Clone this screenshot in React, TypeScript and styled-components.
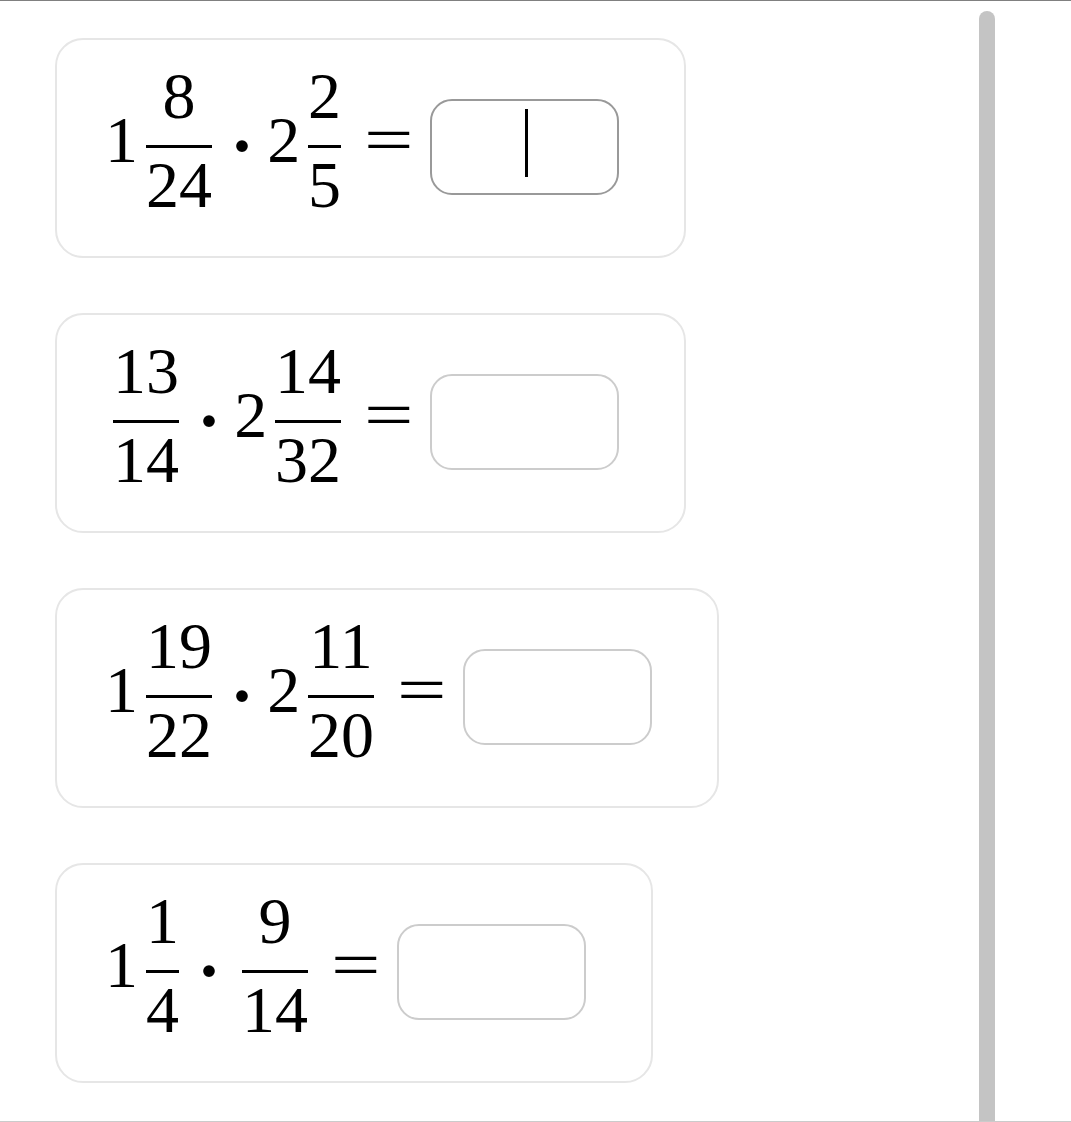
import React from 'react'
import styled, { createGlobalStyle } from 'styled-components'

const GlobalStyle = createGlobalStyle`
  html, body {
    margin: 0;
    padding: 0;
    background: #fff;
  }
  body {
    font-family: 'Liberation Serif', 'Times New Roman', serif;
  }
`

const Page = styled.div`
  box-sizing: border-box;
  height: 1122px;
  border-top: 1px solid #808080;
  border-bottom: 1px solid #cbcbcb;
  display: flex;
  overflow: hidden;
`

const List = styled.div`
  flex: 1;
  display: flex;
  flex-direction: column;
  align-items: flex-start;
  gap: 55px;
  padding: 37px 0 0 55px;
`

const Rail = styled.div`
  width: 16px;
  margin: 10px 76px 0 0;
  background: #c4c4c4;
  border-radius: 8px 8px 0 0;
`

const Card = styled.div`
  display: flex;
  align-items: center;
  padding: 23px 65px 38.4px 48px;
  border: 2px solid #e6e6e6;
  border-radius: 28px;
  font-size: 66px;
  line-height: 66px;
  color: #000;
`

const Whole = styled.span`
  display: inline-block;
  width: 0.5em;
  text-align: center;
`

const Frac = styled.span`
  display: inline-flex;
  flex-direction: column;
  align-items: center;
  padding: 0 0.12em;
`

const Num = styled.span`
  line-height: 66px;
  margin-bottom: 16px;
`

const Bar = styled.span`
  align-self: stretch;
  height: 2.6px;
  background: #000;
`

const Den = styled.span`
  line-height: 66px;
  margin-top: 4px;
`

const Dot = styled.span`
  display: inline-block;
  width: 0.278em;
  margin: 0 19px 0 10px;
  text-align: center;
  transform: translateY(6px) scale(1.5);
`

const Equals = styled.span`
  display: inline-block;
  width: 0.778em;
  margin: 0 16px 0 14px;
  text-align: center;
  transform: scaleX(1.33);
`

const AnswerBox = styled.div<{ $active?: boolean }>`
  box-sizing: border-box;
  width: 189px;
  height: 96px;
  margin-top: 14px;
  border: 2px solid ${p => (p.$active ? '#999' : '#ccc')};
  border-radius: 22px;
  display: flex;
  align-items: center;
  justify-content: center;
`

const Caret = styled.span`
  width: 2.5px;
  height: 68px;
  margin: 0 0 9px 3px;
  background: #000;
`

type Term = { w?: string; n: string; d: string }
type Row = { terms: Term[]; active?: boolean }

const rows: Row[] = [
  { terms: [{ w: '1', n: '8', d: '24' }, { w: '2', n: '2', d: '5' }], active: true },
  { terms: [{ n: '13', d: '14' }, { w: '2', n: '14', d: '32' }] },
  { terms: [{ w: '1', n: '19', d: '22' }, { w: '2', n: '11', d: '20' }] },
  { terms: [{ w: '1', n: '1', d: '4' }, { n: '9', d: '14' }] },
]

const MixedNumber = ({ term }: { term: Term }) => (
  <>
    {term.w && <Whole>{term.w}</Whole>}
    <Frac>
      <Num>{term.n}</Num>
      <Bar />
      <Den>{term.d}</Den>
    </Frac>
  </>
)

const App = () => (
  <>
    <GlobalStyle />
    <Page>
      <List>
        {rows.map((row, key) => (
          <Card key={key}>
            <MixedNumber term={row.terms[0]} />
            <Dot>·</Dot>
            <MixedNumber term={row.terms[1]} />
            <Equals>=</Equals>
            <AnswerBox $active={row.active}>{row.active && <Caret />}</AnswerBox>
          </Card>
        ))}
      </List>
      <Rail />
    </Page>
  </>
)

export default App
